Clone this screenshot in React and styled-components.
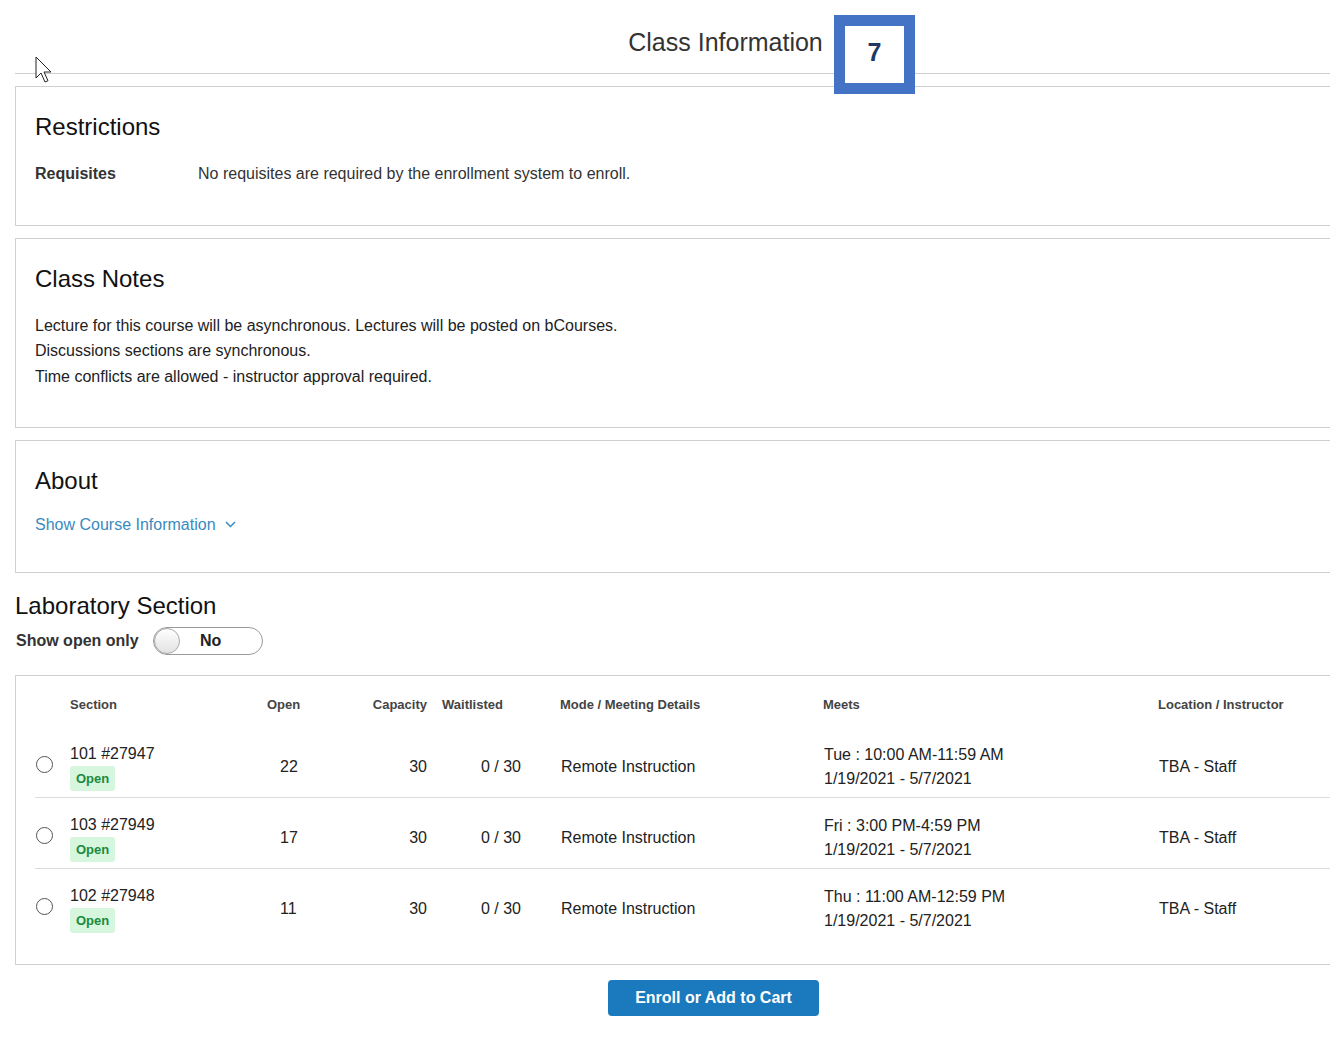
import React from 'react'
import styled, { createGlobalStyle } from 'styled-components'

const GlobalStyle = createGlobalStyle`
  html, body {
    margin: 0;
    padding: 0;
    background: #fff;
    overflow: hidden;
  }
  body {
    font-family: "Liberation Sans", Arial, sans-serif;
    color: #222;
  }
`

const Page = styled.div`
  position: relative;
  width: 1330px;
  height: 1037px;
  overflow: hidden;
`

const Content = styled.div`
  width: 1421px;
  margin-left: 15px;
`

const Header = styled.header`
  padding: 28px 0 17px;
  border-bottom: 1px solid #d0d0d0;
  text-align: center;
`

const Title = styled.h1`
  margin: 0;
  font-size: 25px;
  font-weight: 400;
  line-height: 28px;
  color: #333;
`

const StepBadge = styled.div`
  position: absolute;
  left: 834px;
  top: 15px;
  width: 81px;
  height: 79px;
  box-sizing: border-box;
  border: 11px solid #4472c4;
  background: #fff;
  display: flex;
  align-items: center;
  justify-content: center;
  padding-bottom: 4px;
  font-size: 25px;
  font-weight: 700;
  color: #1f3864;
`

const Cursor = styled.svg`
  position: absolute;
  left: 35px;
  top: 56px;
`

const Card = styled.section`
  margin-top: ${(p) => (p.$table ? 20 : 12)}px;
  border: 1px solid #d0d0d0;
  padding: ${(p) => (p.$table ? '0 19px 25px' : '26px 19px 38px')};
`

const CardTitle = styled.h2`
  margin: 0 0 20px;
  font-size: 24px;
  font-weight: 400;
  line-height: 28px;
  color: #111;
`

const InfoRow = styled.div`
  display: flex;
  font-size: 16px;
  line-height: 25.5px;
  color: #333;
`

const InfoLabel = styled.span`
  width: 163px;
  flex-shrink: 0;
  font-weight: 700;
  color: #333;
`

const NoteLine = styled.p`
  margin: 0;
  font-size: 16px;
  line-height: 25.5px;
  color: #222;
`

const MoreLink = styled.a`
  display: inline-flex;
  align-items: center;
  gap: 9px;
  font-size: 16px;
  line-height: 19px;
  color: #3a8ac0;
  text-decoration: none;
`

const SectionTitle = styled.h2`
  margin: 19px 0 0;
  font-size: 24px;
  font-weight: 400;
  line-height: 28px;
  color: #111;
`

const FilterRow = styled.div`
  display: flex;
  align-items: center;
  gap: 14px;
  margin-top: 7px;
  padding-left: 1px;
`

const FilterLabel = styled.span`
  font-size: 16px;
  font-weight: 700;
  color: #333;
`

const Toggle = styled.div`
  width: 110px;
  height: 28px;
  box-sizing: border-box;
  border: 1px solid #9a9a9a;
  border-radius: 14px;
  display: flex;
  align-items: center;
  background: #fff;
`

const Knob = styled.span`
  width: 26px;
  height: 26px;
  flex-shrink: 0;
  box-sizing: border-box;
  border: 1px solid #a8a8a8;
  border-radius: 50%;
  background: linear-gradient(#ffffff, #e2e2e2);
`

const ToggleText = styled.span`
  flex: 1;
  padding-right: 20px;
  text-align: center;
  font-size: 16px;
  font-weight: 700;
  color: #222;
`

const Grid = styled.div`
  display: grid;
  grid-template-columns: 35px 197px 80px 80px 133px 263px 335px 1fr;
  align-items: center;
  padding: ${(p) => (p.$head ? '21px 0 15px' : '16px 0 6px')};
  border-bottom: ${(p) => (p.$line ? '1px solid #dcdcdc' : 'none')};
`

const HeadCell = styled.div`
  font-size: 13px;
  font-weight: 700;
  line-height: 15px;
  color: #444;
  text-align: ${(p) => p.$align || 'left'};
  padding-left: ${(p) => p.$pl || 0}px;
`

const Cell = styled.div`
  font-size: 16px;
  line-height: 24px;
  color: #222;
  text-align: ${(p) => p.$align || 'left'};
  padding-left: ${(p) => p.$pl || 0}px;
  padding-right: ${(p) => p.$pr || 0}px;
`

const Radio = styled.span`
  display: block;
  width: 17px;
  height: 17px;
  box-sizing: border-box;
  margin: 0 0 6px 1px;
  border: 1px solid #555;
  border-radius: 50%;
  background: #fff;
`

const SectionCell = styled.div`
  display: flex;
  flex-direction: column;
  align-items: flex-start;
  gap: 2px;
`

const SectionNum = styled.span`
  font-size: 16px;
  line-height: 20px;
  color: #222;
`

const StatusBadge = styled.span`
  height: 25px;
  line-height: 25px;
  padding: 0 6px;
  border-radius: 3px;
  background: #d6f6de;
  color: #1c8a3d;
  font-size: 13px;
  font-weight: 700;
`

const ButtonRow = styled.div`
  display: flex;
  justify-content: center;
  padding-right: 24px;
  margin-top: 15px;
`

const EnrollButton = styled.button`
  width: 211px;
  height: 36px;
  border: none;
  border-radius: 4px;
  background: #1a7abd;
  color: #fff;
  font-family: "Liberation Sans", Arial, sans-serif;
  font-size: 16px;
  font-weight: 700;
  cursor: pointer;
`

const sections = [
  { num: '101 #27947', open: 22, cap: 30, wait: '0 / 30', mode: 'Remote Instruction', day: 'Tue : 10:00 AM-11:59 AM', loc: 'TBA - Staff' },
  { num: '103 #27949', open: 17, cap: 30, wait: '0 / 30', mode: 'Remote Instruction', day: 'Fri : 3:00 PM-4:59 PM', loc: 'TBA - Staff' },
  { num: '102 #27948', open: 11, cap: 30, wait: '0 / 30', mode: 'Remote Instruction', day: 'Thu : 11:00 AM-12:59 PM', loc: 'TBA - Staff' },
]

export default function App() {
  return (
    <Page>
      <GlobalStyle />
      <Content>
        <Header>
          <Title>Class Information</Title>
        </Header>

        <Card>
          <CardTitle>Restrictions</CardTitle>
          <InfoRow>
            <InfoLabel>Requisites</InfoLabel>
            <span>No requisites are required by the enrollment system to enroll.</span>
          </InfoRow>
        </Card>

        <Card>
          <CardTitle>Class Notes</CardTitle>
          <NoteLine>Lecture for this course will be asynchronous. Lectures will be posted on bCourses.</NoteLine>
          <NoteLine>Discussions sections are synchronous.</NoteLine>
          <NoteLine>Time conflicts are allowed - instructor approval required.</NoteLine>
        </Card>

        <Card>
          <CardTitle>About</CardTitle>
          <MoreLink href="#">
            Show Course Information
            <svg width="11" height="7" viewBox="0 0 11 7">
              <path d="M1 1l4.5 4.5L10 1" fill="none" stroke="#3a8ac0" strokeWidth="1.5" />
            </svg>
          </MoreLink>
        </Card>

        <SectionTitle>Laboratory Section</SectionTitle>
        <FilterRow>
          <FilterLabel>Show open only</FilterLabel>
          <Toggle>
            <Knob />
            <ToggleText>No</ToggleText>
          </Toggle>
        </FilterRow>

        <Card $table>
          <Grid $head>
            <span />
            <HeadCell>Section</HeadCell>
            <HeadCell>Open</HeadCell>
            <HeadCell $align="right">Capacity</HeadCell>
            <HeadCell $pl={15}>Waitlisted</HeadCell>
            <HeadCell>Mode / Meeting Details</HeadCell>
            <HeadCell>Meets</HeadCell>
            <HeadCell>Location / Instructor</HeadCell>
          </Grid>
          {sections.map((s, i) => (
            <Grid key={s.num} $line={i < sections.length - 1}>
              <Radio />
              <SectionCell>
                <SectionNum>{s.num}</SectionNum>
                <StatusBadge>Open</StatusBadge>
              </SectionCell>
              <Cell $pl={13}>{s.open}</Cell>
              <Cell $align="right">{s.cap}</Cell>
              <Cell $align="right" $pr={39}>{s.wait}</Cell>
              <Cell $pl={1}>{s.mode}</Cell>
              <Cell $pl={1}>
                {s.day}
                <br />
                1/19/2021 - 5/7/2021
              </Cell>
              <Cell $pl={1}>{s.loc}</Cell>
            </Grid>
          ))}
        </Card>

        <ButtonRow>
          <EnrollButton>Enroll or Add to Cart</EnrollButton>
        </ButtonRow>
      </Content>

      <StepBadge>7</StepBadge>

      <Cursor width="18" height="28" viewBox="0 0 18 28">
        <path d="M1 1v21l5-5 4 9 3-1.3-4-8.7h7z" fill="#fff" stroke="#222" strokeWidth="1" strokeLinejoin="round" />
      </Cursor>
    </Page>
  )
}
